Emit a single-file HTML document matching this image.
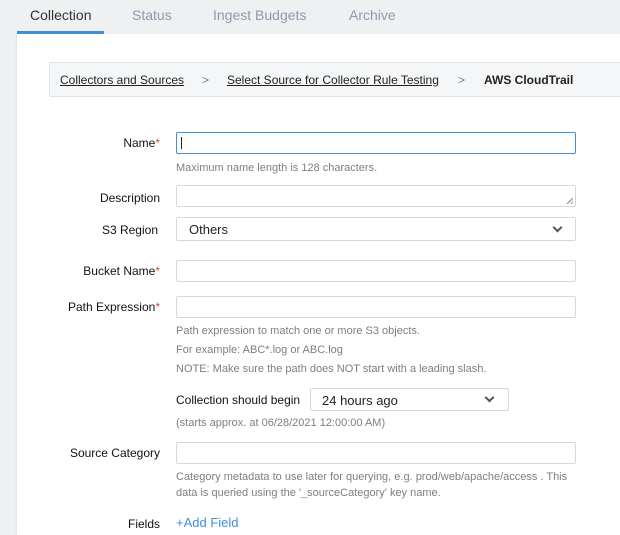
<!DOCTYPE html>
<html><head><style>
*{margin:0;padding:0;box-sizing:border-box}
body{width:620px;height:535px;background:#eef0f2;font-family:"Liberation Sans",sans-serif;position:relative;overflow:hidden;color:#222}
.a{position:absolute;white-space:nowrap}
.tab{font-size:14px;color:#8e9aab;top:7px}
.panel{position:absolute;left:17px;top:34px;right:0;bottom:0;background:#fff;box-shadow:-1px 0 2px rgba(0,0,0,.06)}
.bc{position:absolute;left:49px;top:62px;width:600px;height:35px;background:#f5f6f7;border:1px solid #dfe2e6;border-radius:2px}
.bc span{position:absolute;top:10px;font-size:12px;color:#222}
.u{text-decoration:underline}
.lbl{font-size:12px;color:#111;text-align:right;right:460px}
.req{color:#e0463c}
.in{position:absolute;left:176px;width:400px;height:22px;border:1px solid #d4d8dd;border-radius:2px;background:#fff}
.help{font-size:11px;color:#7a7f86;left:176px}
.chev{position:absolute;width:7px;height:7px;border-right:2px solid #555;border-bottom:2px solid #555;transform:rotate(45deg)}
</style></head><body>
<div class="a tab" style="left:30px;color:#333">Collection</div>
<div class="a tab" style="left:132px">Status</div>
<div class="a tab" style="left:213px">Ingest Budgets</div>
<div class="a tab" style="left:349px">Archive</div>
<div class="panel"></div>
<div class="a" style="left:17px;top:31px;width:87px;height:3px;background:#3f8fd9"></div>
<div class="bc">
<span class="u" style="left:10px">Collectors and Sources</span>
<span style="left:152px;color:#777">&gt;</span>
<span class="u" style="left:177px">Select Source for Collector Rule Testing</span>
<span style="left:408px;color:#777">&gt;</span>
<span style="left:434px;font-weight:bold">AWS CloudTrail</span>
</div>

<div class="a lbl" style="top:136px">Name<span class="req">*</span></div>
<div class="in" style="top:132px;border-color:#3f8fd9"><div style="position:absolute;left:4px;top:4px;width:1px;height:12px;background:#222"></div></div>
<div class="a help" style="top:162px">Maximum name length is 128 characters.</div>

<div class="a lbl" style="top:191px">Description</div>
<div class="in" style="top:185px"><div style="position:absolute;right:2px;bottom:2px;width:6px;height:6px;background:linear-gradient(135deg,transparent 45%,#888 45%,#888 55%,transparent 55%,transparent 75%,#888 75%,#888 85%,transparent 85%)"></div></div>

<div class="a lbl" style="top:223px;right:462px">S3 Region</div>
<div class="in" style="top:217px;height:24px"><span class="a" style="left:12px;top:4px;font-size:13px">Others</span><div class="chev" style="right:14px;top:6px"></div></div>

<div class="a lbl" style="top:264px">Bucket Name<span class="req">*</span></div>
<div class="in" style="top:260px"></div>

<div class="a lbl" style="top:300px">Path Expression<span class="req">*</span></div>
<div class="in" style="top:296px"></div>
<div class="a help" style="top:325px">Path expression to match one or more S3 objects.</div>
<div class="a help" style="top:344px">For example: ABC*.log or ABC.log</div>
<div class="a help" style="top:363px">NOTE: Make sure the path does NOT start with a leading slash.</div>

<div class="a" style="left:176px;top:393px;font-size:12px;color:#111">Collection should begin</div>
<div class="in" style="top:388px;left:310px;width:199px;height:23px"><span class="a" style="left:11px;top:4px;font-size:13px">24 hours ago</span><div class="chev" style="right:15px;top:5px"></div></div>
<div class="a help" style="top:417px">(starts approx. at 06/28/2021 12:00:00 AM)</div>

<div class="a lbl" style="top:446px">Source Category</div>
<div class="in" style="top:442px"></div>
<div class="a help" style="top:471px">Category metadata to use later for querying, e.g. prod/web/apache/access . This</div>
<div class="a help" style="top:487px">data is queried using the '_sourceCategory' key name.</div>

<div class="a lbl" style="top:517px">Fields</div>
<div class="a" style="left:176px;top:515px;font-size:13px;color:#3f8fd9">+Add Field</div>
</body></html>
